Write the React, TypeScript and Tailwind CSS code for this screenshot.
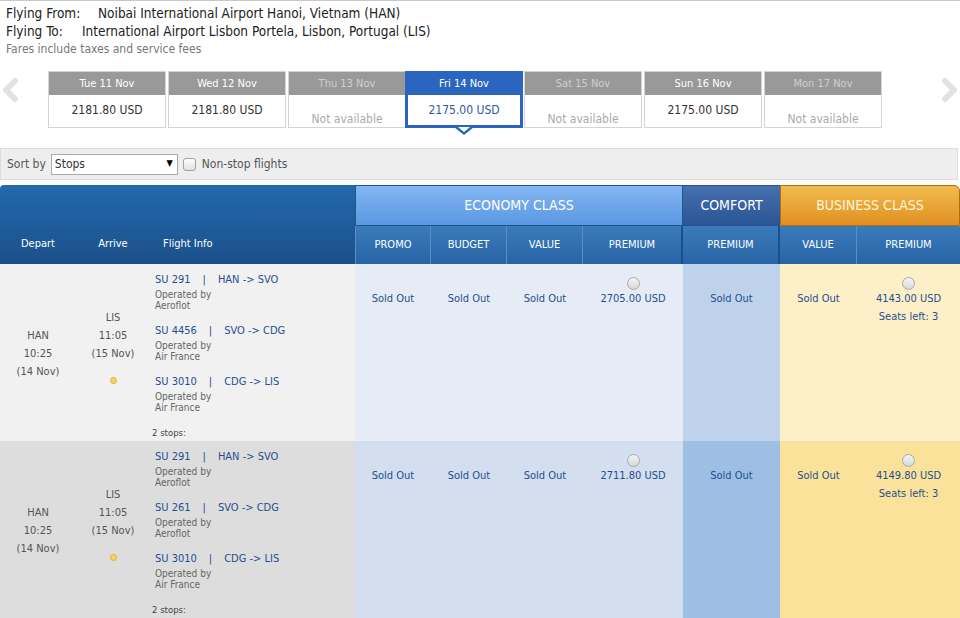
import { useState } from 'react'

type DateTab = { label: string; price?: string }

const dates: DateTab[] = [
  { label: 'Tue 11 Nov', price: '2181.80 USD' },
  { label: 'Wed 12 Nov', price: '2181.80 USD' },
  { label: 'Thu 13 Nov' },
  { label: 'Fri 14 Nov', price: '2175.00 USD' },
  { label: 'Sat 15 Nov' },
  { label: 'Sun 16 Nov', price: '2175.00 USD' },
  { label: 'Mon 17 Nov' },
]

type Segment = { flight: string; route: string; carrier: string }

type Fare = { price?: string; seats?: number }

type Itinerary = {
  segments: Segment[]
  fares: Fare[]
}

const itineraries: Itinerary[] = [
  {
    segments: [
      { flight: 'SU 291', route: 'HAN -> SVO', carrier: 'Aeroflot' },
      { flight: 'SU 4456', route: 'SVO -> CDG', carrier: 'Air France' },
      { flight: 'SU 3010', route: 'CDG -> LIS', carrier: 'Air France' },
    ],
    fares: [{}, {}, {}, { price: '2705.00 USD' }, {}, {}, { price: '4143.00 USD', seats: 3 }],
  },
  {
    segments: [
      { flight: 'SU 291', route: 'HAN -> SVO', carrier: 'Aeroflot' },
      { flight: 'SU 261', route: 'SVO -> CDG', carrier: 'Aeroflot' },
      { flight: 'SU 3010', route: 'CDG -> LIS', carrier: 'Air France' },
    ],
    fares: [{}, {}, {}, { price: '2711.80 USD' }, {}, {}, { price: '4149.80 USD', seats: 3 }],
  },
]

const cols = 'grid grid-cols-[76px_74px_205px_76px_76px_76px_100px_97px_77px_103px]'

// background per fare column, odd / even rows
const fareBg = [
  ['bg-[#e6ecf6]', 'bg-[#d3deef]'],
  ['bg-[#e6ecf6]', 'bg-[#d3deef]'],
  ['bg-[#e6ecf6]', 'bg-[#d3deef]'],
  ['bg-[#e6ecf6]', 'bg-[#d3deef]'],
  ['bg-[#bed3eb]', 'bg-[#9dbfe4]'],
  ['bg-[#fdf0c9]', 'bg-[#fbe29b]'],
  ['bg-[#fdf0c9]', 'bg-[#fbe29b]'],
]

function Chevron({ dir }: { dir: 'left' | 'right' }) {
  return (
    <svg width="20" height="26" viewBox="0 0 20 26" className="shrink-0">
      <polyline
        points={dir === 'left' ? '14,4 5,13 14,22' : '6,4 15,13 6,22'}
        fill="none"
        stroke="#e2e2e2"
        strokeWidth="6"
        strokeLinecap="round"
        strokeLinejoin="round"
      />
    </svg>
  )
}

function Radio() {
  return (
    <span className="inline-block w-[13px] h-[13px] rounded-full border border-[#a9a9a9] bg-gradient-to-b from-[#f4f4f4] to-[#d8d8d8]" />
  )
}

function DateStrip() {
  const [selected, setSelected] = useState(3)

  return (
    <div className="flex items-start h-[70px] mt-[13px]">
      <div className="w-[48px] pt-[6px] pl-[1px]">
        <Chevron dir="left" />
      </div>
      <div className="flex gap-[2px]">
        {dates.map((d, i) => {
          const active = i === selected
          if (active) {
            return (
              <div key={d.label} className="relative w-[118px] -ml-[3px] -mr-[1px]">
                <div className="border-[3px] border-[#2a66bf] bg-white h-[57px]">
                  <div className="h-[21px] bg-[#2a66bf] text-white text-[11px] leading-[19px] text-center">
                    {d.label}
                  </div>
                  <div className="text-[12px] text-[#2a5aa8] text-center leading-[30px]">{d.price}</div>
                </div>
                {/* pointer under the active day */}
                <svg width="20" height="8" viewBox="0 0 20 8" className="absolute left-[49px] top-[56px]">
                  <polygon points="0,0 20,0 10,8" fill="#2a66bf" />
                  <polygon points="4,0 16,0 10,5" fill="#ffffff" />
                </svg>
              </div>
            )
          }
          return (
            <button
              key={d.label}
              onClick={() => d.price && setSelected(i)}
              className="w-[118px] border border-[#d4d4d4] bg-white text-center p-0"
            >
              <div
                className={`h-[23px] bg-[#999999] text-[11px] leading-[23px] ${
                  d.price ? 'text-white' : 'text-[#cfcfcf]'
                }`}
              >
                {d.label}
              </div>
              {d.price ? (
                <div className="h-[32px] text-[12px] text-[#333] leading-[30px]">{d.price}</div>
              ) : (
                <div className="h-[32px] text-[12px] text-[#aaaaaa] leading-[12px] pt-[18px]">Not available</div>
              )}
            </button>
          )
        })}
      </div>
      <div className="ml-auto mr-[1px] pt-[6px]">
        <Chevron dir="right" />
      </div>
    </div>
  )
}

function SortBar() {
  return (
    <div className="mt-[7px] h-[32px] bg-[#eeeeee] border border-[#dcdcdc] flex items-center gap-[5px] pl-[6px] text-[12px] text-[#555] mr-[2px]">
      <span>Sort by</span>
      <div className="w-[127px] h-[21px] bg-white border border-[#a9a9a9] flex items-center justify-between px-[3px] text-[#333]">
        <span>Stops</span>
        <span className="text-[9px] text-black pr-[1px]">▼</span>
      </div>
      <span className="inline-block w-[13px] h-[13px] rounded-[3px] border border-[#a0a0a0] bg-gradient-to-b from-[#fdfdfd] to-[#e2e2e2]" />
      <span className="ml-[1px]">Non-stop flights</span>
    </div>
  )
}

function TableHead() {
  const sub = ['PROMO', 'BUDGET', 'VALUE', 'PREMIUM', 'PREMIUM', 'VALUE', 'PREMIUM']
  return (
    <div className={`${cols} grid-rows-[41px_38px] text-white`}>
      <div className="col-span-3 row-span-2 bg-gradient-to-b from-[#2368ad] via-[#1f5c9c] to-[#1a5088] rounded-tl-[4px] flex items-end pb-[12px] text-[11px]">
        <div className="w-[76px] text-center">Depart</div>
        <div className="w-[74px] text-center">Arrive</div>
        <div className="pl-[13px]">Flight Info</div>
      </div>
      <div className="col-span-4 bg-gradient-to-b from-[#83b6f2] to-[#5a97e2] border border-[#22548f] flex items-center justify-center text-[14px]">
        ECONOMY CLASS
      </div>
      <div className="bg-gradient-to-b from-[#4670b0] to-[#2a5594] border-y border-[#22548f] flex items-center justify-center text-[14px]">
        COMFORT
      </div>
      <div className="col-span-2 bg-gradient-to-b from-[#f2bb4c] to-[#e0901f] border border-[#b36d10] rounded-tr-[6px] flex items-center justify-center text-[14px] text-[#fff6dc]">
        BUSINESS CLASS
      </div>
      {sub.map((s, i) => (
        <div
          key={i}
          className={`bg-gradient-to-b from-[#3b7bbb] to-[#2864a6] flex items-center justify-center text-[11px] ${
            i < 6 ? 'border-r border-[#5b8dc6]' : ''
          } ${i === 0 ? 'border-l border-[#5b8dc6]' : ''} ${i === 3 || i === 4 ? 'border-r-2 border-r-[#1f4f8a]' : ''}`}
        >
          {s}
        </div>
      ))}
    </div>
  )
}

function Row({ it, odd }: { it: Itinerary; odd: boolean }) {
  const leftBg = odd ? 'bg-[#f1f1f1]' : 'bg-[#dddddd]'
  return (
    <div className={`${cols} h-[177px] text-[11px]`}>
      <div className={`${leftBg} flex flex-col items-center justify-center text-[#555] leading-[18px] pt-[2px]`}>
        <span>HAN</span>
        <span>10:25</span>
        <span>(14 Nov)</span>
      </div>
      <div className={`${leftBg} flex flex-col items-center justify-center text-[#555] leading-[18px] pb-[12px]`}>
        <span>LIS</span>
        <span>11:05</span>
        <span>(15 Nov)</span>
        <span className="mt-[14px] w-[7px] h-[7px] rounded-full bg-[#f3d55a] border border-[#d9b540]" />
      </div>
      <div className={`${leftBg} pl-[5px] pt-[9px]`}>
        {it.segments.map((s) => (
          <div key={s.flight + s.route} className="mb-[13px]">
            <div className="flex text-[#1f4f8f] leading-[13px]">
              <span>{s.flight}</span>
              <span className="mx-[12px]">|</span>
              <span>{s.route}</span>
            </div>
            <div className="text-[10px] text-[#666] leading-[11px] mt-[3px]">Operated by</div>
            <div className="text-[10px] text-[#666] leading-[11px]">{s.carrier}</div>
          </div>
        ))}
        <div className="text-[9.5px] text-[#444] mt-[1px] -ml-[3px]">2 stops:</div>
      </div>
      {it.fares.map((f, i) => (
        <div
          key={i}
          className={`${fareBg[i][odd ? 0 : 1]} flex flex-col items-center text-[#1f4f8f] leading-[18px] ${
            f.price ? 'pt-[13px]' : 'pt-[26px]'
          }`}
        >
          {f.price ? (
            <>
              <Radio />
              <span>{f.price}</span>
              {f.seats ? <span>Seats left: {f.seats}</span> : null}
            </>
          ) : (
            <span>Sold Out</span>
          )}
        </div>
      ))}
    </div>
  )
}

export default function App() {
  return (
    <div className="w-[960px] h-[618px] overflow-hidden bg-white border-t border-[#c8c8c8] font-['DejaVu_Sans_Condensed','DejaVu_Sans',sans-serif]">
      {/* Route summary */}
      <div className="pl-[6px] pt-[3px] text-[13.5px] text-[#222] leading-[18px]">
        <div>
          <span className="inline-block w-[92px]">Flying From:</span>
          Noibai International Airport Hanoi, Vietnam (HAN)
        </div>
        <div>
          <span className="inline-block w-[76px]">Flying To:</span>
          International Airport Lisbon Portela, Lisbon, Portugal (LIS)
        </div>
        <div className="text-[12px] text-[#777]">Fares include taxes and service fees</div>
      </div>

      <DateStrip />
      <SortBar />

      <div className="mt-[5px]">
        <TableHead />
        {itineraries.map((it, i) => (
          <Row key={i} it={it} odd={i % 2 === 0} />
        ))}
      </div>
    </div>
  )
}
